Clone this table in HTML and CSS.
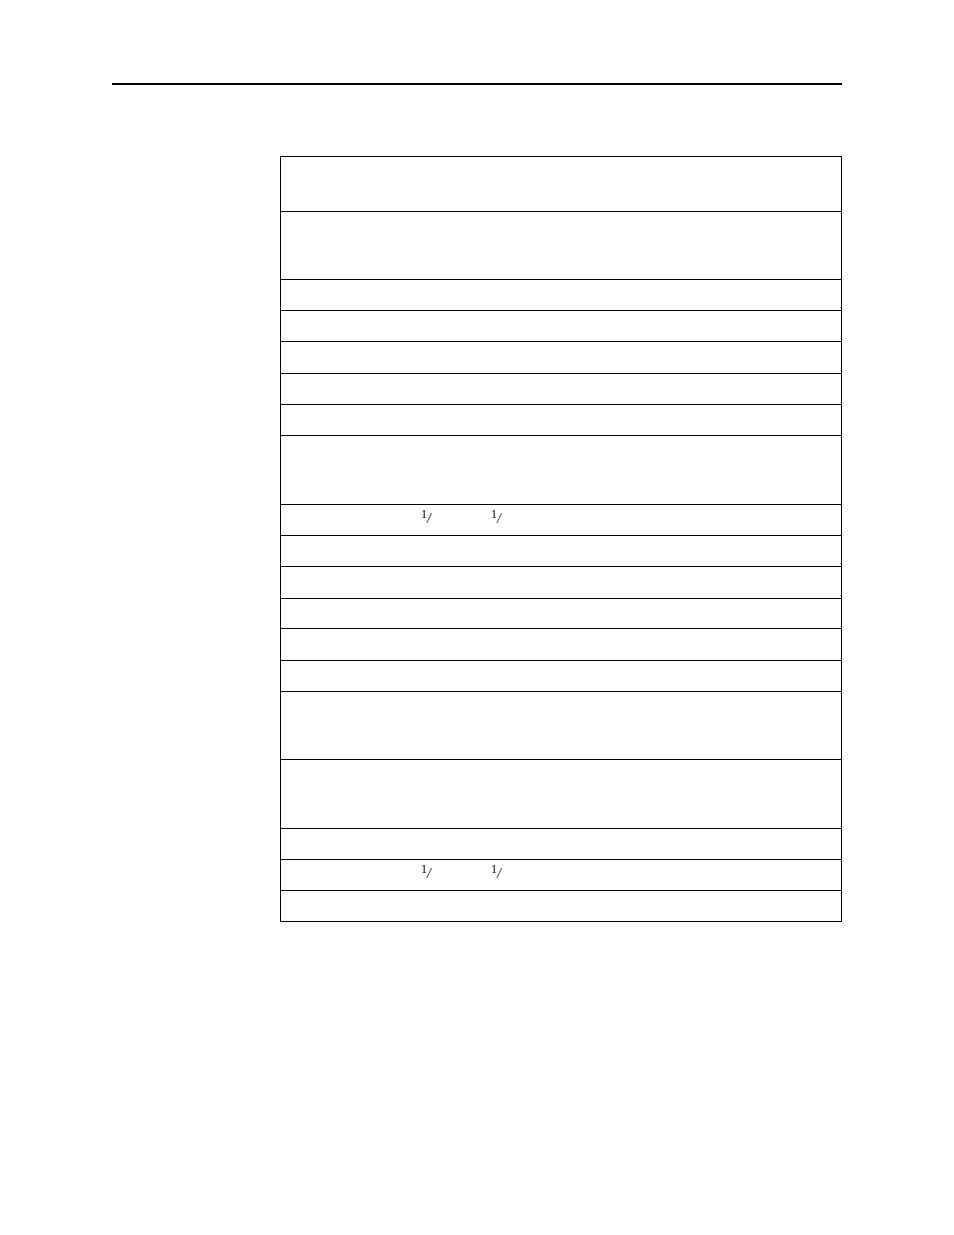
FILE: index.html
```html
<!DOCTYPE html>
<html>
<head>
<meta charset="utf-8">
<link rel="stylesheet" href="styles.css">
</head>
<body>
<div class="rule"></div>
<div class="table">
  <div class="row h54"></div>
  <div class="row h67"></div>
  <div class="row h30"></div>
  <div class="row h30"></div>
  <div class="row h31"></div>
  <div class="row h30"></div>
  <div class="row h30"></div>
  <div class="row h68"></div>
  <div class="row h30 frow">
    <span class="frac"><span class="num">1</span><span class="sl">/</span></span>
    <span class="frac"><span class="num">1</span><span class="sl">/</span></span>
  </div>
  <div class="row h30"></div>
  <div class="row h31"></div>
  <div class="row h29"></div>
  <div class="row h31"></div>
  <div class="row h30"></div>
  <div class="row h67"></div>
  <div class="row h68"></div>
  <div class="row h30"></div>
  <div class="row h30 frow">
    <span class="frac"><span class="num">1</span><span class="sl">/</span></span>
    <span class="frac"><span class="num">1</span><span class="sl">/</span></span>
  </div>
  <div class="row h30"></div>
</div>
</body>
</html>
```
FILE: styles.css
```css
html, body {
  margin: 0;
  padding: 0;
  background: #fff;
  font-family: "Liberation Serif", "DejaVu Serif", serif;
  color: #000;
}
.rule {
  margin: 83px 0 0 112px;
  width: 730px;
  height: 2px;
  background: #000;
}
.table {
  margin: 71px 0 0 280px;
  width: 560px;
  border: 1px solid #000;
  border-bottom: none;
}
.row {
  border-bottom: 1px solid #000;
  box-sizing: content-box;
}
.h29 { height: 29px; }
.h30 { height: 30px; }
.h31 { height: 31px; }
.h54 { height: 54px; }
.h67 { height: 67px; }
.h68 { height: 68px; }
.frow {
  display: flex;
  align-items: flex-start;
  padding-left: 140px;
  gap: 59px;
  height: 30px;
}
.frac {
  display: flex;
  align-items: flex-start;
  width: 11px;
  margin-top: 3px;
}
.num {
  font-size: 12px;
  line-height: 12px;
}
.sl {
  font-size: 14px;
  line-height: 14px;
  margin-top: 4px;
  font-style: italic;
}
```
